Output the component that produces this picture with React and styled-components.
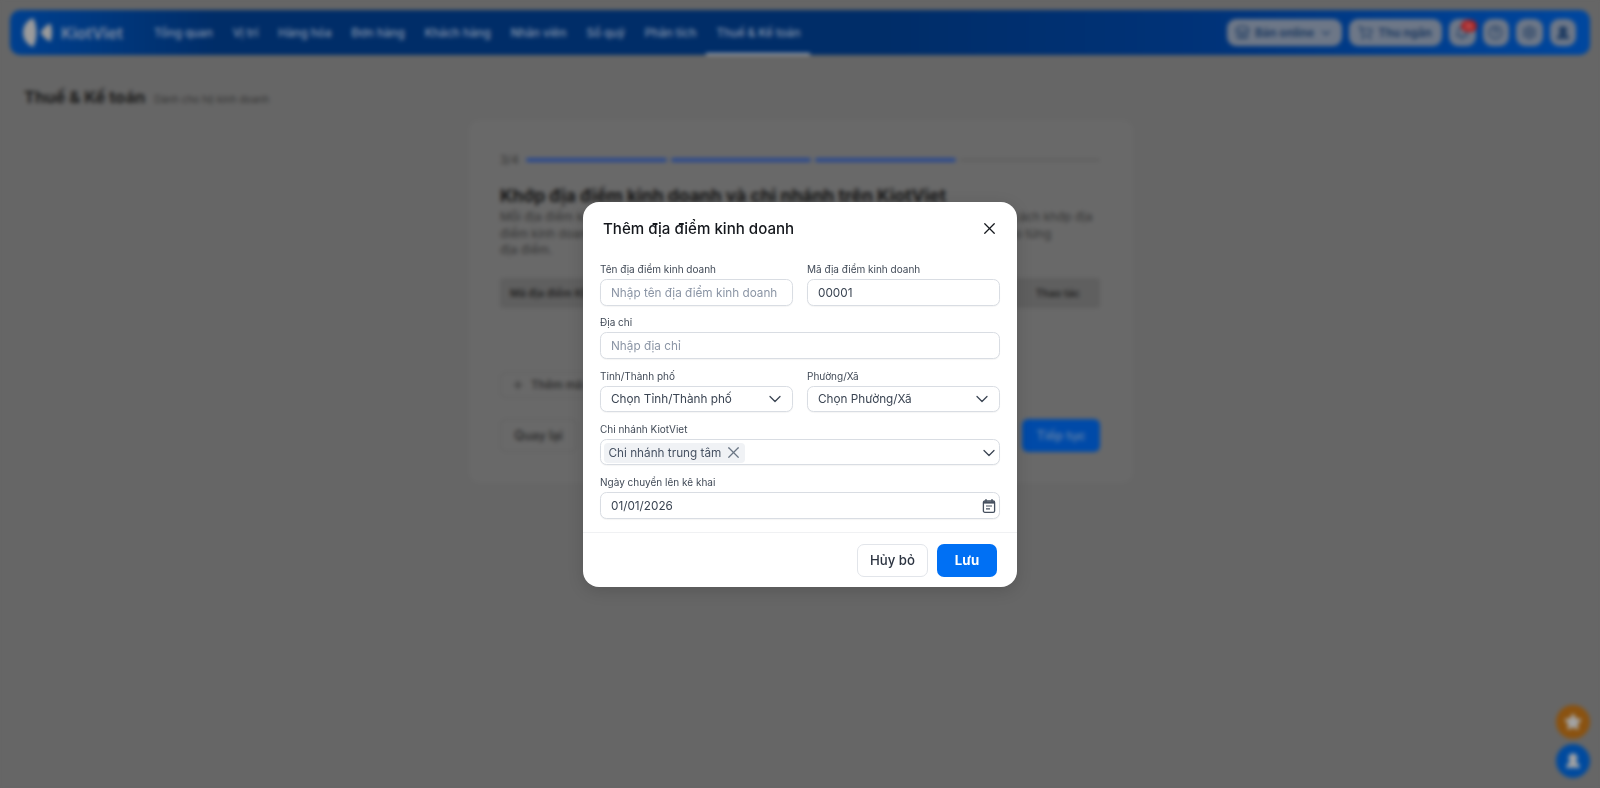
import React from "react";
import styled, { createGlobalStyle } from "styled-components";
import { X, ChevronDown, ShoppingCart, Bell, CircleHelp, Settings, UserRound, Store, Plus, Star } from "lucide-react";

const Global = createGlobalStyle`
  html, body { margin: 0; padding: 0; height: 100%; background: #666666; overflow: hidden; }
  body { font-family: Inter, "Noto Sans", "Liberation Sans", sans-serif; }
  * { box-sizing: border-box; }
`;

const Page = styled.div`
  width: 1600px;
  height: 788px;
  padding: 10px 10px 0;
  background: #666666;
  display: flex;
  flex-direction: column;
`;
const Header = styled.header`
  height: 45px;
  flex: none;
  border-radius: 10px;
  background: linear-gradient(90deg, #00408f 0%, #002d68 13%, #002d68 55%, #003379 76%, #00479f 100%);
  display: flex;
  align-items: center;
  padding: 0 14px 0 13px;
`;
const Brand = styled.div`
  display: flex;
  align-items: center;
  gap: 8px;
  width: 121px;
  flex: none;
  color: #7f8da4;
  font-size: 16px;
  font-weight: 600;
`;
const Nav = styled.nav`
  display: flex;
  height: 100%;
  flex: 1;
`;
const NavItem = styled.div`
  height: 100%;
  padding: 0 10px;
  display: flex;
  align-items: center;
  font-size: 11.6px;
  font-weight: 500;
  color: #8a98ae;
  white-space: nowrap;
  border-bottom: 2px solid ${(p) => (p.$active ? "#a8adb5" : "transparent")};
  border-top: 2px solid transparent;
`;
const Tools = styled.div`
  display: flex;
  align-items: center;
  gap: 7px;
`;
const ToolButton = styled.div`
  position: relative;
  height: 27px;
  width: ${(p) => p.$w}px;
  border-radius: 9px;
  background: #6d7787;
  color: #1f3c62;
  font-size: 11.6px;
  font-weight: 700;
  display: flex;
  align-items: center;
  justify-content: center;
  gap: 5px;
`;
const Badge = styled.span`
  position: absolute;
  top: 1px;
  right: -1px;
  width: 16px;
  height: 12px;
  border-radius: 6px;
  background: #a51d1d;
  color: #c06a6a;
  font-size: 7px;
  display: flex;
  align-items: center;
  justify-content: center;
`;
const TitleRow = styled.div`
  display: flex;
  align-items: baseline;
  gap: 9px;
  margin: 32px 0 0 14px;
  height: 33px;
`;
const PageTitle = styled.h1`
  margin: 0;
  font-size: 16.5px;
  font-weight: 700;
  color: #1a1a1a;
`;
const PageSub = styled.span`
  font-size: 10px;
  color: #333;
`;
const Card = styled.section`
  width: 664px;
  height: 363px;
  flex: none;
  margin: 0 0 0 459px;
  background: #696969;
  border-radius: 10px;
  padding: 32px 33px 0 31px;
`;
const Progress = styled.div`
  display: flex;
  align-items: center;
  gap: 4px;
  height: 16px;
`;
const StepText = styled.span`
  font-size: 11.5px;
  color: #333;
  width: 22px;
`;
const Segment = styled.div`
  flex: 1;
  height: ${(p) => (p.$on ? 4 : 2)}px;
  border-radius: 2px;
  background: ${(p) => (p.$on ? "#27478f" : "#5c5c5c")};
`;
const CardTitle = styled.h2`
  margin: 16px 0 0;
  font-size: 17.5px;
  line-height: 24px;
  font-weight: 700;
  color: #161616;
  white-space: nowrap;
`;
const CardText = styled.p`
  margin: 1px 0 0;
  font-size: 12px;
  line-height: 16.5px;
  color: #333;
  white-space: nowrap;
`;
const TableHead = styled.div`
  margin-top: 19.5px;
  height: 30px;
  background: #5f5f5f;
  display: flex;
  align-items: center;
  justify-content: space-between;
  padding: 0 20px 0 10px;
  font-size: 10.5px;
  font-weight: 600;
  color: #222;
  border-radius: 3px;
`;
const AddButton = styled.div`
  margin-top: 64px;
  width: 150px;
  height: 26px;
  border: 1px solid #606060;
  border-radius: 6px;
  display: flex;
  align-items: center;
  gap: 6px;
  padding: 0 10px;
  font-size: 11.5px;
  font-weight: 600;
  color: #2e2e2e;
`;
const CardActions = styled.div`
  margin-top: 21px;
  display: flex;
  justify-content: space-between;
`;
const BackButton = styled.div`
  width: 77px;
  height: 33px;
  border: 1px solid #606060;
  border-radius: 6px;
  display: flex;
  align-items: center;
  justify-content: center;
  font-size: 12.5px;
  font-weight: 600;
  color: #2e2e2e;
`;
const NextButton = styled(BackButton)`
  width: 78px;
  background: #004aa8;
  border: none;
  color: #5c7ea8;
`;
const Floating = styled.div`
  position: fixed;
  right: 10px;
  bottom: 10px;
  display: flex;
  flex-direction: column;
  gap: 5px;
`;
const Fab = styled.div`
  width: 34px;
  height: 34px;
  border-radius: 50%;
  background: ${(p) => p.$bg};
  color: #a3a3a3;
  display: flex;
  align-items: center;
  justify-content: center;
`;

const Backdrop = styled.div`
  position: fixed;
  inset: 0;
  padding-top: 1px;
  backdrop-filter: blur(2px);
  display: flex;
  align-items: center;
  justify-content: center;
`;
const Modal = styled.div`
  width: 434px;
  height: 385px;
  background: #fff;
  border-radius: 16px;
  display: flex;
  flex-direction: column;
  box-shadow: 0 4px 16px rgba(0, 0, 0, 0.15);
`;
const ModalHead = styled.div`
  height: 60px;
  flex: none;
  display: flex;
  align-items: center;
  justify-content: space-between;
  padding: 0 18.5px 7px 20px;
  color: #15181d;
`;
const ModalTitle = styled.h3`
  margin: 0;
  font-size: 15.1px;
  font-weight: 500;
  color: #14171c;
`;
const Form = styled.div`
  display: grid;
  grid-template-columns: 193px 193px;
  column-gap: 14px;
  row-gap: 9.7px;
  padding: 0 17px;
  flex: 1;
  align-content: start;
`;
const Field = styled.div`
  grid-column: ${(p) => (p.$wide ? "1 / -1" : "auto")};
  display: flex;
  flex-direction: column;
  gap: 2px;
`;
const Label = styled.label`
  font-size: 10px;
  line-height: 15px;
  height: 15px;
  color: #414a57;
  white-space: nowrap;
`;
const Control = styled.div`
  height: 26.6px;
  border: 1px solid #d9dde3;
  box-shadow: 0 1px 1px rgba(0, 0, 0, 0.04);
  border-radius: 6.5px;
  background: #fff;
  padding: 1px ${(p) => p.$right ?? 10}px 0 ${(p) => (p.$chip ? 2.5 : 10)}px;
  display: flex;
  align-items: center;
  justify-content: space-between;
  font-size: 11.75px;
  color: ${(p) => (p.$muted ? "#8b95a5" : "#3a4452")};
  white-space: nowrap;
`;
const Chip = styled.span`
  height: 20px;
  padding: 0 2px 0 5px;
  border-radius: 4px;
  background: #f0f2f5;
  color: #475263;
  display: inline-flex;
  align-items: center;
  gap: 2.5px;
`;
const ChipClose = styled(X)`
  color: #6b7684;
`;
const Footer = styled.div`
  height: 55px;
  flex: none;
  border-top: 1px solid #f0f1f3;
  display: flex;
  align-items: center;
  justify-content: flex-end;
  gap: 9px;
  padding: 0 20px;
`;
const Cancel = styled.button`
  width: 71px;
  height: 33px;
  border: 1px solid #e2e5ea;
  border-radius: 7px;
  background: #fff;
  color: #2b3340;
  font: 500 13.2px Inter, sans-serif;
`;
const Save = styled.button`
  width: 60px;
  height: 33px;
  border: none;
  border-radius: 7px;
  background: #0070f4;
  color: #fff;
  font: 700 13.2px Inter, sans-serif;
`;

const Logo = () => (
  <svg width="30" height="29" viewBox="0 0 30 29" fill="#9b9b9b">
    <path d="M10 0C3.500 3 0 8 0 14.500S3.500 26 10 29C12.500 25 13.500 20 13.500 14.500S12.500 4 10 0Z" />
    <path d="M27.500 5.500C28.500 9 29 11.500 29 14.500S28.500 20 27.500 23.500C23 22 20 18.500 17.500 14.500C20 10.500 23 7 27.500 5.500Z" />
  </svg>
);

const CalendarIcon = () => (
  <svg width="14" height="14" viewBox="0 0 14 14" fill="none">
    <path d="M4 .5V2.500M10 .5V2.500" stroke="#46505f" strokeWidth="1.300" strokeLinecap="round" />
    <rect x="1.400" y="2" width="11.200" height="11.300" rx="1.400" stroke="#46505f" strokeWidth="1.300" />
    <path d="M1.400 3.600H12.600" stroke="#46505f" strokeWidth="2" />
    <path d="M4 7H10M4 9.800H8" stroke="#46505f" strokeWidth="1.200" />
  </svg>
);

const navItems = ["Tổng quan", "Vị trí", "Hàng hóa", "Đơn hàng", "Khách hàng", "Nhân viên", "Sổ quỹ", "Phân tích"];

export default function App() {
  return (
    <>
      <Global />
      <Page>
        <Header>
          <Brand>
            <Logo />
            KiotViet
          </Brand>
          <Nav>
            {navItems.map((n) => (
              <NavItem key={n}>{n}</NavItem>
            ))}
            <NavItem $active>Thuế &amp; Kế toán</NavItem>
          </Nav>
          <Tools>
            <ToolButton $w={115}>
              <Store size={15} />
              Bán online
              <ChevronDown size={14} />
            </ToolButton>
            <ToolButton $w={93}>
              <ShoppingCart size={15} />
              Thu ngân
            </ToolButton>
            <ToolButton $w={27}>
              <Bell size={14} />
              <Badge>36</Badge>
            </ToolButton>
            <ToolButton $w={26.5}>
              <CircleHelp size={15} />
            </ToolButton>
            <ToolButton $w={26.5}>
              <Settings size={15} />
            </ToolButton>
            <ToolButton $w={26.5}>
              <UserRound size={16} fill="currentColor" />
            </ToolButton>
          </Tools>
        </Header>
        <TitleRow>
          <PageTitle>Thuế &amp; Kế toán</PageTitle>
          <PageSub>Dành cho hộ kinh doanh</PageSub>
        </TitleRow>
        <Card>
          <Progress>
            <StepText>3/4</StepText>
            <Segment $on />
            <Segment $on />
            <Segment $on />
            <Segment />
          </Progress>
          <CardTitle>Khớp địa điểm kinh doanh và chi nhánh trên KiotViet</CardTitle>
          <CardText>
            Mỗi địa điểm kinh doanh cần được liên kết với một chi nhánh trên KiotViet. Hãy chọn đúng cách khớp địa
            <br />
            điểm kinh doanh với chi nhánh phù hợp để hệ thống KiotViet tổng hợp số liệu chính xác theo từng
            <br />
            địa điểm.
          </CardText>
          <TableHead>
            <span>Mã địa điểm KD</span>
            <span>Thao tác</span>
          </TableHead>
          <AddButton>
            <Plus size={14} />
            Thêm mã địa điểm
          </AddButton>
          <CardActions>
            <BackButton>Quay lại</BackButton>
            <NextButton>Tiếp tục</NextButton>
          </CardActions>
        </Card>
        <Floating>
          <Fab $bg="#8a5210">
            <Star size={18} fill="currentColor" />
          </Fab>
          <Fab $bg="#004a9e">
            <UserRound size={18} fill="currentColor" />
          </Fab>
        </Floating>
      </Page>
      <Backdrop>
        <Modal>
          <ModalHead>
            <ModalTitle>Thêm địa điểm kinh doanh</ModalTitle>
            <X size={19} strokeWidth={1.6} />
          </ModalHead>
          <Form>
            <Field>
              <Label>Tên địa điểm kinh doanh</Label>
              <Control $muted>Nhập tên địa điểm kinh doanh</Control>
            </Field>
            <Field>
              <Label>Mã địa điểm kinh doanh</Label>
              <Control>00001</Control>
            </Field>
            <Field $wide>
              <Label>Địa chỉ</Label>
              <Control $muted>Nhập địa chỉ</Control>
            </Field>
            <Field>
              <Label>Tỉnh/Thành phố</Label>
              <Control $right={7}>
                Chọn Tỉnh/Thành phố
                <ChevronDown size={20} strokeWidth={1.5} />
              </Control>
            </Field>
            <Field>
              <Label>Phường/Xã</Label>
              <Control $right={7}>
                Chọn Phường/Xã
                <ChevronDown size={20} strokeWidth={1.5} />
              </Control>
            </Field>
            <Field $wide>
              <Label>Chi nhánh KiotViet</Label>
              <Control $chip $right={0}>
                <Chip>
                  Chi nhánh trung tâm
                  <ChipClose size={19} strokeWidth={1.5} />
                </Chip>
                <ChevronDown size={20} strokeWidth={1.5} />
              </Control>
            </Field>
            <Field $wide>
              <Label>Ngày chuyển lên kê khai</Label>
              <Control $right={3}>
                01/01/2026
                <CalendarIcon />
              </Control>
            </Field>
          </Form>
          <Footer>
            <Cancel>Hủy bỏ</Cancel>
            <Save>Lưu</Save>
          </Footer>
        </Modal>
      </Backdrop>
    </>
  );
}
